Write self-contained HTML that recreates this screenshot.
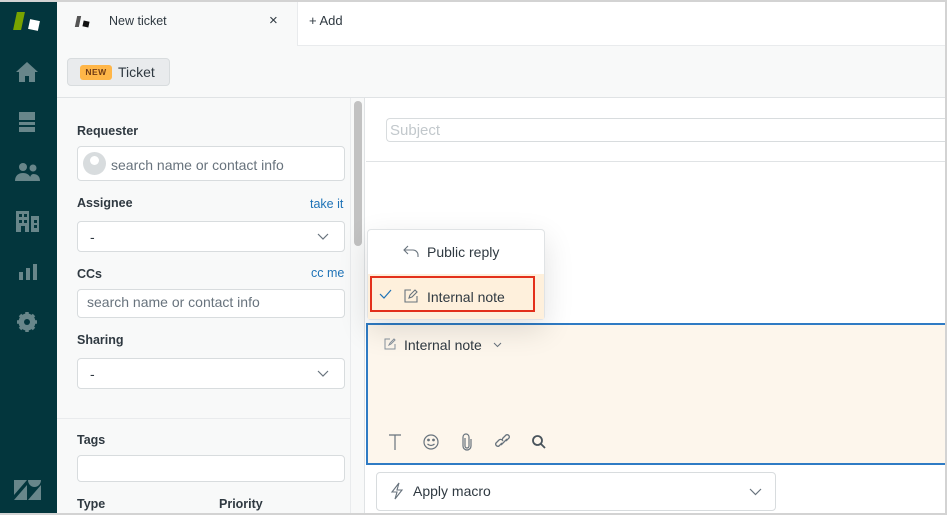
<!DOCTYPE html>
<html><head><meta charset="utf-8"><style>
*{box-sizing:border-box;margin:0;padding:0}
body{width:947px;height:515px;overflow:hidden;font-family:"Liberation Sans",sans-serif;background:#fff;position:relative;color:#2f3941}
.a{position:absolute}
.lbl{font-size:12.5px;font-weight:bold;color:#2f3941}
.inp{background:#fff;border:1px solid #d8dcde;border-radius:4px;height:35px;width:268px;left:77px}
.ph{font-size:14px;color:#68737d}
.lnk{font-size:12.5px;color:#1f73b7}
</style></head><body>
<!-- sidebar -->
<div class="a" style="left:0;top:0;width:57px;height:515px;background:#03363d"></div>
<div class="a" style="left:15px;top:12px;width:8px;height:18px;background:#78a300;transform:skewX(-12deg)"></div>
<div class="a" style="left:29px;top:20px;width:10px;height:10px;background:#fff;transform:rotate(12deg)"></div>
<svg class="a" style="left:15px;top:61px" width="24" height="22" viewBox="0 0 24 22"><path d="M12 1L1 11h3v10h6v-6h4v6h6V11h3z" fill="#68868a"/></svg>
<svg class="a" style="left:17px;top:111px" width="20" height="22" viewBox="0 0 20 22"><rect x="2" y="1" width="16" height="8" fill="#68868a"/><rect x="2" y="11" width="16" height="3" fill="#68868a"/><rect x="2" y="16" width="16" height="5" fill="#68868a"/></svg>
<svg class="a" style="left:15px;top:163px" width="25" height="18" viewBox="0 0 25 18"><circle cx="8" cy="4" r="4" fill="#68868a"/><circle cx="18" cy="5" r="3.5" fill="#68868a"/><path d="M0 18c0-6 4-8 8-8s8 2 8 8z M15 18c0-4 0-6 3-7 4 0 7 2 7 7z" fill="#68868a"/></svg>
<svg class="a" style="left:16px;top:211px" width="23" height="21" viewBox="0 0 23 21"><path d="M0 0h13v21H0z M15 5h8v16h-8z" fill="#68868a"/><g fill="#03363d"><rect x="3" y="3" width="3" height="3"/><rect x="8" y="3" width="3" height="3"/><rect x="3" y="9" width="3" height="3"/><rect x="8" y="9" width="3" height="3"/><rect x="5" y="15" width="4" height="6"/><rect x="18" y="9" width="3" height="3"/><rect x="18" y="14" width="3" height="3"/></g></svg>
<svg class="a" style="left:19px;top:264px" width="18" height="16" viewBox="0 0 18 16"><rect x="0" y="8" width="4" height="8" fill="#68868a"/><rect x="7" y="4" width="4" height="12" fill="#68868a"/><rect x="14" y="0" width="4" height="16" fill="#68868a"/></svg>
<svg class="a" style="left:17px;top:312px" width="20" height="20" viewBox="0 0 20 20"><circle cx="10" cy="10" r="6.5" fill="none" stroke="#68868a" stroke-width="4"/><g stroke="#68868a" stroke-width="3.5"><path d="M10 0v20M0 10h20M3 3l14 14M17 3L3 17"/></g><circle cx="10" cy="10" r="3" fill="#03363d"/></svg>
<svg class="a" style="left:14px;top:480px" width="27" height="20" viewBox="0 0 27 20"><path d="M0 0h13L0 15z M13 20H0L13 5z M14 0h13c0 4-3 7-6.5 7S14 4 14 0z M14 20L27 5v15z" fill="#68868a"/></svg>
<!-- tab bar -->
<div class="a" style="left:57px;top:0;width:890px;height:97px;background:#f8f9f9"></div>
<div class="a" style="left:297px;top:0;width:650px;height:46px;background:#fff;border-left:1px solid #e9ebed;border-bottom:1px solid #e9ebed"></div>
<div class="a" style="left:76px;top:16px;width:4px;height:11px;background:#555;transform:skewX(-12deg)"></div>
<div class="a" style="left:83px;top:21px;width:6px;height:6px;background:#111;transform:rotate(12deg)"></div>
<div class="a" style="left:109px;top:14px;font-size:12.5px">New ticket</div>
<div class="a" style="left:269px;top:12px;font-size:15px">×</div>
<div class="a" style="left:309px;top:13px;font-size:13px">+ Add</div>
<div class="a" style="left:67px;top:58px;width:103px;height:28px;background:#e9ebed;border:1px solid #d8dcde;border-radius:4px"></div>
<div class="a" style="left:80px;top:65px;width:32px;height:15px;background:#ffb648;border-radius:3px;color:#703b15;font-size:8.5px;font-weight:bold;text-align:center;line-height:15px;letter-spacing:.5px">NEW</div>
<div class="a" style="left:118px;top:64px;font-size:14px">Ticket</div>
<div class="a" style="left:57px;top:97px;width:890px;height:1px;background:#e0e3e5"></div>
<!-- left panel -->
<div class="a" style="left:57px;top:98px;width:293px;height:417px;background:#f8f9f9"></div>
<div class="a" style="left:350px;top:98px;width:15px;height:417px;background:#f8f9f9;border-left:1px solid #e9ebed;border-right:1px solid #e0e3e5"></div>
<div class="a" style="left:354px;top:101px;width:8px;height:145px;background:#c2c2c2;border-radius:4px"></div>
<div class="a lbl" style="left:77px;top:124px">Requester</div>
<div class="a inp" style="top:146px"></div>
<div class="a" style="left:83px;top:152px;width:23px;height:23px;border-radius:50%;background:#d8dcde"></div>
<div class="a" style="left:90px;top:156px;width:9px;height:9px;border-radius:50%;background:#fff"></div>
<div class="a ph" style="left:111px;top:157px">search name or contact info</div>
<div class="a lbl" style="left:77px;top:196px">Assignee</div>
<div class="a lnk" style="left:310px;top:197px">take it</div>
<div class="a inp" style="top:221px;height:31px"></div>
<div class="a" style="left:90px;top:229px;font-size:14px">-</div>
<svg class="a" style="left:317px;top:233px" width="12" height="7"><path d="M1 1l5 5 5-5" fill="none" stroke="#68737d" stroke-width="1.2"/></svg>
<div class="a lbl" style="left:77px;top:267px">CCs</div>
<div class="a lnk" style="left:311px;top:266px">cc me</div>
<div class="a inp" style="top:289px;height:29px"></div>
<div class="a ph" style="left:87px;top:294px">search name or contact info</div>
<div class="a lbl" style="left:77px;top:333px">Sharing</div>
<div class="a inp" style="top:358px;height:31px"></div>
<div class="a" style="left:90px;top:366px;font-size:14px">-</div>
<svg class="a" style="left:317px;top:370px" width="12" height="7"><path d="M1 1l5 5 5-5" fill="none" stroke="#68737d" stroke-width="1.2"/></svg>
<div class="a" style="left:57px;top:418px;width:293px;height:1px;background:#e9ebed"></div>
<div class="a lbl" style="left:77px;top:433px">Tags</div>
<div class="a inp" style="top:455px;height:27px"></div>
<div class="a lbl" style="left:77px;top:497px">Type</div>
<div class="a lbl" style="left:219px;top:497px">Priority</div>
<!-- right -->
<div class="a" style="left:386px;top:118px;width:561px;height:24px;border:1px solid #d8dcde;border-right:none;border-radius:4px 0 0 4px"></div>
<div class="a" style="left:390px;top:122px;font-size:15px;color:#c2c8cc">Subject</div>
<div class="a" style="left:366px;top:161px;width:581px;height:1px;background:#e0e3e5"></div>
<div class="a" style="left:366px;top:323px;width:581px;height:142px;background:#fdf6ec;border:2px solid #2f7bc4;border-right:none"></div>
<svg class="a" style="left:384px;top:338px" width="12" height="12" viewBox="0 0 12 12"><path d="M6 1H1v10h10V6 M5 7l1-2 4-4 1 1-4 4z" fill="none" stroke="#87929d" stroke-width="1"/></svg>
<div class="a" style="left:404px;top:337px;font-size:14px">Internal note</div>
<svg class="a" style="left:493px;top:342px" width="9" height="6"><path d="M1 1l3.5 3.5L8 1" fill="none" stroke="#68737d"/></svg>
<!-- toolbar -->
<svg class="a" style="left:386px;top:433px" width="120" height="18" viewBox="0 0 120 18" fill="none" stroke="#68737d" stroke-width="1.2">
<path d="M3 2h12M9 2v15"/>
<circle cx="45" cy="9" r="7"/><circle cx="42.5" cy="7" r=".8" fill="#68737d"/><circle cx="47.5" cy="7" r=".8" fill="#68737d"/><path d="M41.5 11q3.5 3 7 0"/>
<path d="M79 5v8a2 2 0 0 0 4 0V4a3 3 0 0 0-6 0v9a4 4 0 0 0 8 0V6"/>
<path d="M114 2l0 0"/>
</svg>
<svg class="a" style="left:494px;top:432px" width="20" height="20" viewBox="0 0 20 20" fill="none" stroke="#68737d" stroke-width="1.3"><path d="M8 11l-3 3a2.2 2.2 0 0 1-3-3l3-3a2.2 2.2 0 0 1 3 0M12 9l3-3a2.2 2.2 0 0 0-3-3l-3 3a2.2 2.2 0 0 0 0 3M7 13l6-6"/></svg>
<svg class="a" style="left:531px;top:434px" width="16" height="16" viewBox="0 0 16 16" fill="none" stroke="#49545c" stroke-width="1.8"><circle cx="6.5" cy="6.5" r="4.5"/><path d="M10 10l4 4"/></svg>
<!-- macro -->
<div class="a" style="left:376px;top:472px;width:400px;height:39px;border:1px solid #d8dcde;border-radius:4px;background:#fff"></div>
<svg class="a" style="left:390px;top:482px" width="14" height="18" viewBox="0 0 14 18"><path d="M9 1L2 10h5l-2 7 7-9H7z" fill="none" stroke="#68737d" stroke-width="1.1"/></svg>
<div class="a" style="left:413px;top:483px;font-size:14px">Apply macro</div>
<svg class="a" style="left:749px;top:488px" width="13" height="8"><path d="M1 1l5.5 5.5L12 1" fill="none" stroke="#68737d" stroke-width="1.2"/></svg>
<!-- dropdown -->
<div class="a" style="left:367px;top:229px;width:178px;height:91px;background:#fff;border:1px solid #e0e3e5;border-radius:4px;box-shadow:0 10px 30px rgba(0,0,0,.12)"></div>
<div class="a" style="left:368px;top:274px;width:176px;height:45px;background:#fef0dc"></div>
<svg class="a" style="left:402px;top:244px" width="18" height="14" viewBox="0 0 18 14"><path d="M6 2L2 6l4 4M2 6h9a5 5 0 0 1 5 5v2" fill="none" stroke="#68737d" stroke-width="1.1"/></svg>
<div class="a" style="left:427px;top:244px;font-size:14px">Public reply</div>
<div class="a" style="left:370px;top:276px;width:165px;height:36px;border:2px solid #e3301b"></div>
<svg class="a" style="left:379px;top:289px" width="13" height="10"><path d="M1 5l4 4 7-8" fill="none" stroke="#1f73b7" stroke-width="1.2"/></svg>
<svg class="a" style="left:403px;top:288px" width="16" height="16" viewBox="0 0 16 16"><path d="M8 2H2v12h12V8 M6 10l1-3 5-5 2 2-5 5z" fill="none" stroke="#68737d" stroke-width="1.1"/></svg>
<div class="a" style="left:427px;top:289px;font-size:14px">Internal note</div>
<!-- frame borders -->
<div class="a" style="left:0;top:0;width:947px;height:2px;background:#d3d3d3"></div>
<div class="a" style="left:945px;top:0;width:2px;height:515px;background:#d3d3d3"></div>
<div class="a" style="left:0;top:513px;width:947px;height:2px;background:#d3d3d3"></div>
</body></html>
